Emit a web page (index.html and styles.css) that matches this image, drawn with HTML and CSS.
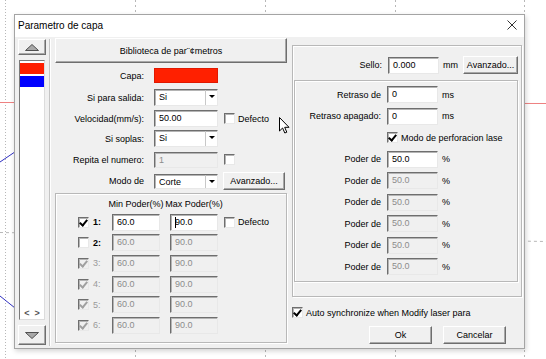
FILE: index.html
```html
<!DOCTYPE html>
<html lang="es">
<head>
  <meta charset="UTF-8">
  <title>Parametro de capa</title>
  <link rel="stylesheet" href="styles.css">
</head>
<body>
  <!-- canvas lines behind the dialog -->
  <svg class="backdrop" width="546" height="359" viewBox="0 0 546 359">
    <line x1="5.5" y1="0" x2="5.5" y2="359" stroke="#b8b8b8" stroke-dasharray="1 2"/>
    <line x1="135.5" y1="0" x2="135.5" y2="359" stroke="#b8b8b8" stroke-dasharray="2 3"/>
    <line x1="265.5" y1="0" x2="265.5" y2="359" stroke="#b8b8b8" stroke-dasharray="2 3"/>
    <line x1="395.5" y1="0" x2="395.5" y2="359" stroke="#b8b8b8" stroke-dasharray="2 3"/>
    <line x1="524.5" y1="0" x2="524.5" y2="359" stroke="#b8b8b8" stroke-dasharray="2 3"/>
    <line x1="0" y1="102.5" x2="546" y2="103.5" stroke="#ee8080"/>
    <line x1="0" y1="232.5" x2="546" y2="241.5" stroke="#b8b8b8" stroke-dasharray="3 3"/>
    <line x1="0" y1="162" x2="40" y2="135" stroke="#3030c0"/>
    <line x1="0" y1="296" x2="30" y2="320" stroke="#3030c0"/>
  </svg>

  <div class="dialog">
    <div class="titlebar">
      <span class="title">Parametro de capa</span>
      <svg class="close" width="10" height="10" viewBox="0 0 10 10">
        <path d="M0.5 0.5 L9.5 9.5 M9.5 0.5 L0.5 9.5" stroke="#333" stroke-width="1" fill="none"/>
      </svg>
    </div>

    <div class="dialog-body">
      <div class="layers">
        <div class="btn arrow-btn">
          <svg width="14" height="7" viewBox="0 0 14 7"><polygon points="7,0.5 13.5,6.5 0.5,6.5" fill="#a8a8a8" stroke="#505050"/></svg>
        </div>
        <div class="layer-list">
          <div class="layer layer-red"></div>
          <div class="layer layer-blue"></div>
          <div class="list-scroll">&lt;&nbsp;&nbsp;&gt;</div>
        </div>
        <div class="btn arrow-btn arrow-down">
          <svg width="14" height="7" viewBox="0 0 14 7"><polygon points="0.5,0.5 13.5,0.5 7,6.5" fill="#a8a8a8" stroke="#505050"/></svg>
        </div>
      </div>

      <div class="vsep"></div>

      <div class="col-left">
        <div class="btn lib-btn">Biblioteca de par¨¢metros</div>

        <div class="form-grid">
          <label>Capa:</label>
          <div class="swatch"></div>
          <span></span>

          <label>Si para salida:</label>
          <div class="field select"><span>Si</span><i class="drop"></i></div>
          <span></span>

          <label>Velocidad(mm/s):</label>
          <div class="field">50.00</div>
          <div class="check-label"><span class="cb"></span>Defecto</div>

          <label>Si soplas:</label>
          <div class="field select"><span>Si</span><i class="drop"></i></div>
          <span></span>

          <label>Repita el numero:</label>
          <div class="field disabled short">1</div>
          <div class="check-label"><span class="cb"></span></div>

          <label>Modo de</label>
          <div class="field select small"><span>Corte</span><i class="drop"></i></div>
          <div class="btn adv-btn">Avanzado...</div>
        </div>

        <div class="group power-box">
          <span></span><span></span>
          <div class="head">Min Poder(%)</div>
          <div class="head">Max Poder(%)</div>
          <span></span>

          <span class="cb checked"></span><b class="num">1:</b>
          <div class="field">60.0</div>
          <div class="field"><i class="caret"></i>90.0</div>
          <div class="check-label"><span class="cb"></span>Defecto</div>

          <span class="cb"></span><b class="num">2:</b>
          <div class="field disabled">60.0</div>
          <div class="field disabled">90.0</div>
          <span></span>

          <span class="cb checked off"></span><span class="num off">3:</span>
          <div class="field disabled">60.0</div>
          <div class="field disabled">90.0</div>
          <span></span>

          <span class="cb checked off"></span><span class="num off">4:</span>
          <div class="field disabled">60.0</div>
          <div class="field disabled">90.0</div>
          <span></span>

          <span class="cb checked off"></span><span class="num off">5:</span>
          <div class="field disabled">60.0</div>
          <div class="field disabled">90.0</div>
          <span></span>

          <span class="cb checked off"></span><span class="num off">6:</span>
          <div class="field disabled">60.0</div>
          <div class="field disabled">90.0</div>
          <span></span>
        </div>
      </div>

      <div class="col-right">
        <div class="group outer-box">
          <div class="sello-row">
            <label>Sello:</label>
            <div class="field">0.000</div>
            <span class="unit">mm</span>
            <div class="btn adv-btn wide">Avanzado...</div>
          </div>

          <div class="group inner-box">
            <label>Retraso de</label>
            <div class="field">0</div>
            <span class="unit">ms</span>

            <label>Retraso apagado:</label>
            <div class="field">0</div>
            <span class="unit">ms</span>

            <span></span>
            <div class="check-label span2"><span class="cb checked"></span>Modo de perforacion lase</div>

            <label>Poder de</label>
            <div class="field">50.0</div>
            <span class="unit">%</span>

            <label>Poder de</label>
            <div class="field disabled">50.0</div>
            <span class="unit">%</span>

            <label>Poder de</label>
            <div class="field disabled">50.0</div>
            <span class="unit">%</span>

            <label>Poder de</label>
            <div class="field disabled">50.0</div>
            <span class="unit">%</span>

            <label>Poder de</label>
            <div class="field disabled">50.0</div>
            <span class="unit">%</span>

            <label>Poder de</label>
            <div class="field disabled">50.0</div>
            <span class="unit">%</span>
          </div>
        </div>

        <div class="check-label sync-row"><span class="cb checked"></span>Auto synchronize when Modify laser para</div>

        <div class="actions">
          <div class="btn action-btn">Ok</div>
          <div class="btn action-btn">Cancelar</div>
        </div>
      </div>
    </div>
  </div>

  <svg class="cursor" width="12" height="18" viewBox="0 0 12 18">
    <path d="M0.5 0.5 L0.5 14 L3.6 11 L5.8 16 L7.8 15.2 L5.7 10.3 L10 10.3 Z" fill="#fff" stroke="#000" stroke-width="1"/>
  </svg>
</body>
</html>
```

FILE: styles.css
```css
/* General */
* {
  box-sizing: border-box;
}

body {
  margin: 0;
  width: 546px;
  height: 359px;
  position: relative;
  overflow: hidden;
  background: #fff;
  font-family: "Liberation Sans", Arial, sans-serif;
  font-size: 9px;
  color: #000;
}

.backdrop {
  position: absolute;
  left: 0;
  top: 0;
}

.cursor {
  position: absolute;
  left: 279px;
  top: 117px;
}

/* Window */
.dialog {
  position: absolute;
  left: 14px;
  top: 14px;
  width: 511px;
  height: 335px;
  border: 1px solid #a4a4a4;
  background: #f0f0f0;
  box-shadow: 1px 2px 5px rgba(0, 0, 0, 0.18);
  display: flex;
  flex-direction: column;
}

.titlebar {
  height: 22px;
  flex-shrink: 0;
  background: #fff;
  display: flex;
  align-items: center;
  justify-content: space-between;
  padding: 0 7px 2px 3px;
  font-size: 10px;
}

.dialog-body {
  flex: 1;
  display: flex;
  padding-left: 3px;
}

/* Shared controls */
.btn {
  background: #f0f0f0;
  border: 1px solid;
  border-color: #fff #6e6e6e #6e6e6e #fff;
  box-shadow: inset -1px -1px 0 #a8a8a8;
  display: flex;
  align-items: center;
  justify-content: center;
}

.field {
  height: 17px;
  background: #fff;
  border: 1px solid;
  border-color: #6e6e6e #e8e8e8 #e8e8e8 #6e6e6e;
  box-shadow: inset 1px 1px 0 #b4b4b4;
  padding: 1px 0 0 4px;
  line-height: 13px;
  white-space: nowrap;
  position: relative;
}

.field.disabled {
  background: #f0f0f0;
  color: #8c8c8c;
}

.field.short {
  height: 16px;
}

.field.small {
  height: 15px;
  line-height: 12px;
}

.select {
  display: flex;
  padding-right: 0;
}

.select span {
  flex: 1;
}

.drop {
  width: 12px;
  margin: -1px 0 0;
  border-left: 1px solid #c8c8c8;
  position: relative;
}

.drop::after {
  content: "";
  position: absolute;
  left: 3px;
  top: 5px;
  border-left: 3px solid transparent;
  border-right: 3px solid transparent;
  border-top: 3px solid #000;
}

.caret {
  position: absolute;
  left: 4px;
  top: 2px;
  width: 1px;
  height: 11px;
  background: #000;
}

.cb {
  width: 11px;
  height: 11px;
  flex-shrink: 0;
  background: #fff;
  border: 1px solid;
  border-color: #6e6e6e #e8e8e8 #e8e8e8 #6e6e6e;
  box-shadow: inset 1px 1px 0 #b4b4b4;
  position: relative;
}

.cb.checked::after {
  content: "";
  position: absolute;
  left: 2px;
  top: 0px;
  width: 3px;
  height: 6px;
  border-right: 2px solid #000;
  border-bottom: 2px solid #000;
  transform: rotate(40deg);
}

.cb.off {
  background: #f0f0f0;
}

.cb.off::after {
  border-color: #a0a0a0;
}

.check-label {
  display: flex;
  align-items: center;
  gap: 3px;
  white-space: nowrap;
}

.group {
  border: 1px solid #b8b8b8;
  box-shadow: inset 1px 1px 0 #fff, 1px 1px 0 #fff;
}

/* Layer strip */
.layers {
  width: 28px;
  display: flex;
  flex-direction: column;
  padding-top: 2px;
}

.arrow-btn {
  height: 16px;
}

.arrow-down {
  height: 20px;
  margin-top: 5px;
}

.layer-list {
  height: 260px;
  margin: 5px 1px 0;
  background: #fff;
  border: 1px solid;
  border-color: #7a7a7a #dcdcdc #dcdcdc #7a7a7a;
  padding: 2px 0 0;
  display: flex;
  flex-direction: column;
  gap: 2px;
}

.layer {
  height: 11px;
}

.layer-red {
  background: #ff1e00;
}

.layer-blue {
  background: #0000ff;
}

.list-scroll {
  margin-top: auto;
  margin-bottom: 1px;
  text-align: center;
  font-weight: bold;
  color: #555;
}

.vsep {
  width: 2px;
  height: 307px;
  margin: 2px 4px 0 3px;
  border-left: 1px solid #c4c4c4;
  border-right: 1px solid #fff;
}

/* Left column */
.col-left {
  width: 232px;
  padding-top: 1px;
}

.lib-btn {
  height: 25px;
  font-size: 9px;
}

.form-grid {
  margin-top: 1.5px;
  display: grid;
  grid-template-columns: 99px 70px auto;
  grid-template-rows: 22px 22px 20px 20px 22px 21px;
  align-items: center;
}

.form-grid label {
  text-align: right;
  padding-right: 10px;
  white-space: nowrap;
}

.form-grid .field {
  width: 64px;
}

.swatch {
  width: 64px;
  height: 15px;
  background: #ff2000;
  border: 1px solid #e01800;
}

.adv-btn {
  width: 62px;
  height: 18px;
  margin-left: -1px;
}

.power-box {
  margin-top: 1.5px;
  height: 150px;
  padding-left: 22px;
  display: grid;
  grid-template-columns: 15px 19px 58px 54px auto;
  grid-template-rows: 18px repeat(6, 20.6px);
  align-items: center;
}

.power-box .field {
  width: 48px;
}

.head {
  width: 48px;
  display: flex;
  justify-content: center;
  white-space: nowrap;
  padding-top: 1px;
}

.num {
  font-weight: bold;
}

.num.off {
  font-weight: normal;
  color: #9a9a9a;
}

/* Right column */
.col-right {
  width: 230px;
  margin-left: 5px;
  padding-top: 8px;
}

.outer-box {
  height: 252px;
  padding: 10px 3px 0 1px;
}

.sello-row {
  height: 18px;
  display: flex;
  align-items: center;
}

.sello-row label {
  width: 88px;
  text-align: right;
}

.sello-row .field {
  width: 51px;
  margin-left: 6px;
}

.unit {
  margin-left: 4px;
}

.adv-btn.wide {
  width: 55px;
  margin-left: auto;
}

.inner-box {
  margin-top: 6px;
  height: 202px;
  padding-top: 3px;
  display: grid;
  grid-template-columns: 92px 55px auto;
  grid-auto-rows: 21.5px;
  align-items: center;
}

.inner-box label {
  text-align: right;
  padding-right: 6px;
  white-space: nowrap;
}

.inner-box .field {
  width: 51px;
}

.inner-box .unit {
  margin-left: 0;
}

.span2 {
  grid-column: 2 / 4;
}

.sync-row {
  margin-top: 10px;
  height: 11px;
}

.actions {
  margin-top: 8px;
  padding-right: 16px;
  display: flex;
  justify-content: flex-end;
  gap: 11px;
}

.action-btn {
  width: 63px;
  height: 18px;
}
```
